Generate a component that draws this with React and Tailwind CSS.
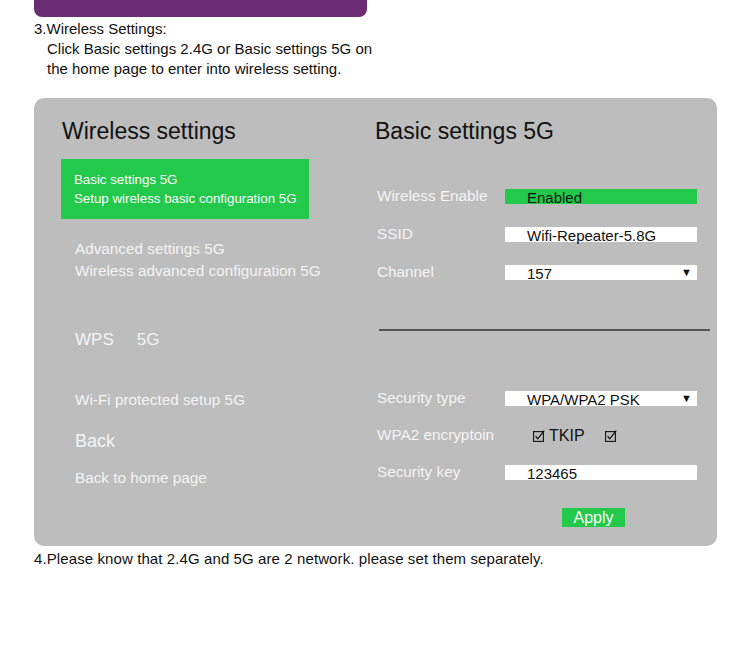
import React from 'react'

const GREEN = 'bg-[#22c94a]'

const CheckBox = () => (
  <svg width="12" height="12" viewBox="0 0 12 12" className="inline-block">
    <rect x="0.6" y="1.6" width="9.8" height="9.8" fill="none" stroke="#111" strokeWidth="1.1" />
    <path d="M2.6 6.2 L4.8 8.8 L11.2 0.6" fill="none" stroke="#111" strokeWidth="1.3" />
  </svg>
)

const Field = ({ children, green, arrow }) => (
  <div
    className={`relative w-[192px] h-[15px] flex items-center pl-[22px] pt-[2px] text-[15px] leading-[15px] text-[#111] ${
      green ? GREEN : 'bg-white'
    }`}
  >
    {children}
    {arrow && <span className="absolute right-[5px] top-0 text-[11px] leading-[15px]">▼</span>}
  </div>
)

const Row = ({ label, tall, children }) => (
  <div className={`flex items-center ${tall ? 'h-[38px]' : 'h-[37px]'}`}>
    <div className="w-[130px] pl-[2px] text-[15.3px] text-[#f4f4f4]">{label}</div>
    {children}
  </div>
)

export default function App() {
  return (
    <div className="w-[750px] h-[663px] bg-white text-[#111] font-['Liberation_Sans',Arial,sans-serif]">
      {/* header bar */}
      <div className="ml-[34px] w-[333px] h-[17px] bg-[#6b2c73] rounded-b-[8px]" />

      <div className="mt-[2px] ml-[34px] text-[15px] leading-[20px]">
        <div>3.Wireless Settings:</div>
        <div className="pl-[13px]">Click Basic settings 2.4G or Basic settings 5G on</div>
        <div className="pl-[13px]">the home page to enter into wireless setting.</div>
      </div>

      {/* router screen */}
      <div className="mt-[19px] ml-[34px] w-[683px] h-[448px] bg-[#bdbdbd] rounded-[10px] flex">
        {/* left menu */}
        <div className="w-[341px] pl-[27px] pt-[18px]">
          <div className="pl-[1px] text-[23px] leading-[30px] text-[#111]">Wireless settings</div>
          <div className={`mt-[13px] w-[248px] h-[60px] ${GREEN} pl-[13px] pt-[11px] text-[13.3px] leading-[19px] text-white`}>
            <div>Basic settings 5G</div>
            <div>Setup wireless basic configuration 5G</div>
          </div>
          <div className="mt-[19px] pl-[14px] text-[15.3px] leading-[22px] text-[#f4f4f4]">
            <div>Advanced settings 5G</div>
            <div>Wireless advanced configuration 5G</div>
          </div>
          <div className="mt-[46px] pl-[14px] flex gap-[23px] text-[17px] leading-[24px] text-[#f4f4f4]">
            <span>WPS</span>
            <span>5G</span>
          </div>
          <div className="mt-[37px] pl-[14px] text-[15.3px] leading-[22px] text-[#f4f4f4]">Wi-Fi protected setup 5G</div>
          <div className="mt-[18px] pl-[14px] text-[18px] leading-[24px] text-[#f4f4f4]">Back</div>
          <div className="mt-[14px] pl-[14px] text-[15.3px] leading-[22px] text-[#f4f4f4]">Back to home page</div>
        </div>

        {/* right form */}
        <div className="flex-1 pt-[18px]">
          <div className="text-[23px] leading-[30px] text-[#111]">Basic settings 5G</div>
          <div className="mt-[31px]">
            <Row label="Wireless Enable" tall>
              <Field green>Enabled</Field>
            </Row>
            <Row label="SSID" tall>
              <Field>Wifi-Repeater-5.8G</Field>
            </Row>
            <Row label="Channel" tall>
              <Field arrow>157</Field>
            </Row>
          </div>
          <div className="mt-[38px] ml-[4px] w-[331px] h-[2px] bg-[#555]" />
          <div className="mt-[49px]">
            <Row label="Security type">
              <Field arrow>WPA/WPA2 PSK</Field>
            </Row>
            <Row label="WPA2 encryptoin">
              <div className="flex items-center pl-[28px] text-[16px] leading-[20px] text-[#111]">
                <CheckBox />
                <span className="ml-[4px]">TKIP</span>
                <span className="ml-[20px] flex">
                  <CheckBox />
                </span>
              </div>
            </Row>
            <Row label="Security key">
              <Field>123465</Field>
            </Row>
          </div>
          <div className={`mt-[17px] ml-[187px] w-[63px] h-[19px] ${GREEN} flex items-center justify-center text-[16px] leading-[19px] text-white`}>
            Apply
          </div>
        </div>
      </div>

      <div className="mt-[3px] ml-[34px] text-[15px] leading-[20px] tracking-[0.1px]">
        4.Please know that 2.4G and 5G are 2 network. please set them separately.
      </div>
    </div>
  )
}
